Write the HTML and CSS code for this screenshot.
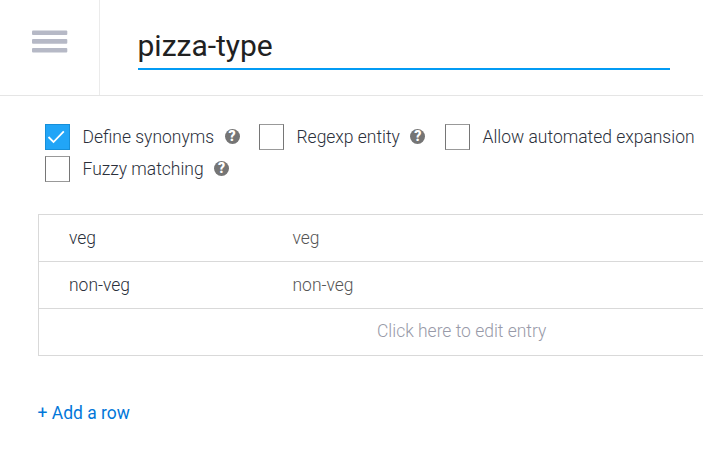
FILE: index.html
```html
<!DOCTYPE html>
<html lang="en">
<head>
<meta charset="utf-8">
<title>pizza-type</title>
<link rel="stylesheet" href="styles.css">
</head>
<body>
<header class="header">
  <div class="menu"><svg class="bars" width="36" height="24" viewBox="0 0 36 24"><g fill="#b6b9c6"><rect y="0.4" width="35.3" height="4.7" rx="1"/><rect y="9.1" width="35.3" height="4.7" rx="1"/><rect y="17.9" width="35.3" height="4.7" rx="1"/></g></svg></div>
  <div class="title-wrap"><h1 class="title">pizza-type</h1></div>
</header>
<main class="content">
  <div class="options">
    <div class="option synonyms"><span class="box checked"><svg width="25" height="26" viewBox="0 0 25 26"><path d="M3.5 13L8.5 18L18.8 7.3" fill="none" stroke="#fff" stroke-width="1.8"/></svg></span><span class="label">Define synonyms</span><span class="help">?</span></div>
    <div class="option regexp"><span class="box"></span><span class="label">Regexp entity</span><span class="help">?</span></div>
    <div class="option expansion"><span class="box"></span><span class="label">Allow automated expansion</span></div>
    <div class="option fuzzy"><span class="box"></span><span class="label">Fuzzy matching</span><span class="help">?</span></div>
  </div>
  <div class="table">
    <div class="row"><span class="key">veg</span><span class="value">veg</span></div>
    <div class="row"><span class="key">non-veg</span><span class="value">non-veg</span></div>
    <div class="row empty"><span>Click here to edit entry</span></div>
  </div>
  <a class="add">+ Add a row</a>
</main>
</body>
</html>
```
FILE: styles.css
```css
* { box-sizing: border-box; }
body { margin: 0; width: 703px; height: 456px; overflow: hidden; background: #fff; font: 300 17.48px/24px Roboto, sans-serif; color: #2b303b; }
.header { display: flex; height: 96px; border-bottom: 1px solid #e5e5e5; }
.menu { width: 100px; border-right: 1px solid #ebebeb; padding: 30px 0 0 32px; }
.bars { display: block; }
.title-wrap { padding: 22px 33px 0 38px; flex: 1; }
.title { margin: 0; height: 48px; border-bottom: 2px solid #039bf4; font-size: 30px; line-height: 48px; font-weight: 400; color: #212121; text-indent: -0.5px; }
.content { padding: 28px 0 0 38px; }
.options { display: grid; grid-template-columns: 214px 186px 258px; grid-auto-rows: 26px; row-gap: 6px; padding-left: 7px; }
.option { display: flex; align-items: center; white-space: nowrap; }
.box { width: 25px; height: 26px; border: 1px solid #767676; border-top-color: #999; border-bottom-color: #999; margin-right: 12.5px; flex: none; }
.box.checked { background: #21a5f7; border-color: #168fd9; }
.box svg { display: block; margin: -1px; }
.help { width: 15px; height: 15px; border-radius: 50%; background: #757575; color: #fff; font-size: 14px; line-height: 15px; font-weight: 900; text-align: center; margin: 0 0 1px 10.5px; }
.table { width: 680px; margin-top: 32px; border: 1px solid #d9d9d9; }
.row { height: 47px; display: flex; align-items: center; border-bottom: 1px solid #d9d9d9; padding-left: 30px; }
.row:last-child { height: 46px; border-bottom: 0; padding-bottom: 2px; }
.key { width: 223.5px; }
.value { color: #555; }
.row.empty { padding-left: 338px; color: #989aa8; }
.add { display: block; margin-top: 45px; color: #0277d9; font-weight: 400; text-indent: -0.5px; }
```
